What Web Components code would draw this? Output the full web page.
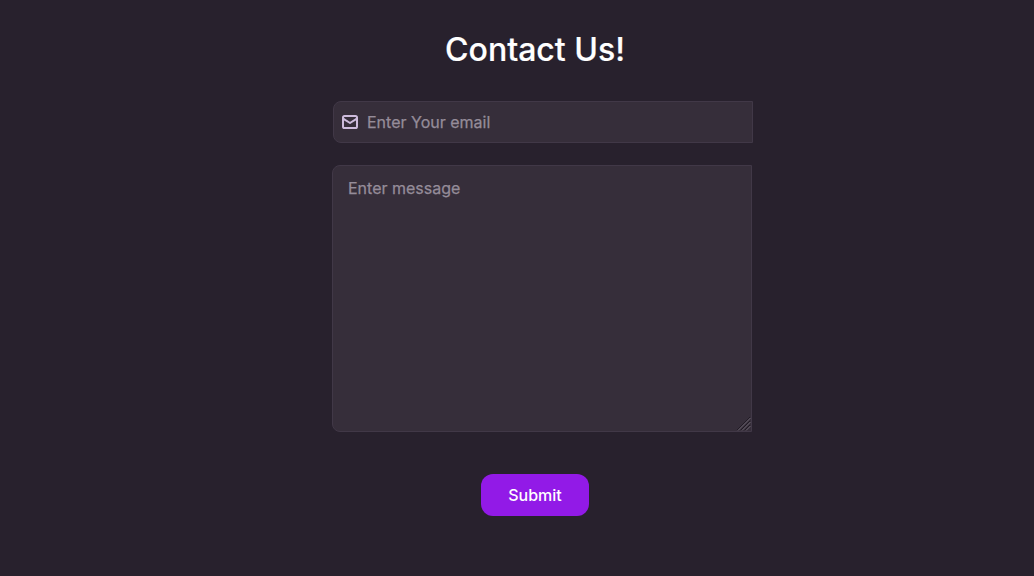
<!DOCTYPE html>
<html lang="en">
<head>
  <meta charset="UTF-8">
  <meta name="viewport" content="width=device-width, initial-scale=1.0">
  <title>Contact Us</title>
  <style>
    body {
      margin: 0;
      background-color: #28212d;
      font-family: Inter, "Liberation Sans", sans-serif;
      color: #fff;
    }
  </style>
</head>
<body>
  <contact-form>
    <span slot="title">Contact Us!</span>
    <email-field>Enter Your email</email-field>
    <message-field>Enter message</message-field>
    <submit-button slot="action">Submit</submit-button>
  </contact-form>

  <script>
    class ContactForm extends HTMLElement {
      constructor() {
        super();
        this.shadowDOM = this.attachShadow({ mode: 'open' });
      }

      connectedCallback() {
        this.render();
      }

      render() {
        this.shadowDOM.innerHTML = `
          <style>
          * {
            margin: 0;
            padding: 0;
            box-sizing: border-box;
          }

          :host {
            display: flex;
            flex-direction: column;
            align-items: center;
            box-sizing: border-box;
            height: 576px;
            padding: 30px 0 0 36px;
          }

          .contact__title {
            font-size: 32px;
            line-height: 40px;
            font-weight: 500;
            white-space: nowrap;
            -webkit-text-stroke: 0.2px currentColor;
          }

          .contact__fields {
            display: flex;
            flex-direction: column;
            gap: 22px;
            width: 421px;
            margin: 31px 0 42px 15px;
          }
          </style>
          <h1 class="contact__title"><slot name="title"></slot></h1>
          <div class="contact__fields"><slot></slot></div>
          <slot name="action"></slot>
        `;
      }
    }

    class EmailField extends HTMLElement {
      constructor() {
        super();
        this.shadowDOM = this.attachShadow({ mode: 'open' });
      }

      connectedCallback() {
        this.render();
      }

      render() {
        this.shadowDOM.innerHTML = `
          <style>
          :host {
            display: flex;
            align-items: center;
            align-self: flex-end;
            gap: 8px;
            box-sizing: border-box;
            width: 420px;
            height: 42px;
            padding-left: 8px;
            border: 1px solid #413847;
            border-radius: 8px 0 0 8px;
            background-color: #362e3a;
            color: #958c99;
            font-size: 16px;
            line-height: 24px;
            -webkit-text-stroke: 0.25px currentColor;
          }

          svg {
            display: block;
            flex: none;
          }
          </style>
          <svg width="17" height="16" viewBox="0 0 17 16" fill="none" stroke="#cdbbdc" stroke-width="2" stroke-linejoin="round">
            <rect x="1" y="2" width="14" height="12" rx="1.6" />
            <path d="M1.5 4.8L8 9L14.5 4.8" />
          </svg>
          <span><slot></slot></span>
        `;
      }
    }

    class MessageField extends HTMLElement {
      constructor() {
        super();
        this.shadowDOM = this.attachShadow({ mode: 'open' });
      }

      connectedCallback() {
        this.render();
      }

      render() {
        this.shadowDOM.innerHTML = `
          <style>
          :host {
            display: flex;
            flex-direction: column;
            justify-content: space-between;
            box-sizing: border-box;
            width: 420px;
            height: 267px;
            padding: 10px 0 0 15px;
            border: 1px solid #413847;
            border-radius: 8px 0 0 8px;
            background-color: #362e3a;
            color: #958c99;
            font-size: 16px;
            line-height: 24px;
            -webkit-text-stroke: 0.25px currentColor;
          }

          svg {
            display: block;
            align-self: flex-end;
          }
          </style>
          <span><slot></slot></span>
          <svg width="15" height="15" viewBox="0 0 15 15" fill="none">
            <path d="M1 14L14 1M5 14L14 5M9 14L14 9" stroke="#211b25" />
            <path d="M2 14.5L14.5 2M6 14.5L14.5 6M10 14.5L14.5 10" stroke="#6c6470" />
          </svg>
        `;
      }
    }

    class SubmitButton extends HTMLElement {
      constructor() {
        super();
        this.shadowDOM = this.attachShadow({ mode: 'open' });
      }

      connectedCallback() {
        this.render();
      }

      render() {
        this.shadowDOM.innerHTML = `
          <style>
          :host {
            display: block;
          }

          button {
            display: block;
            width: 108px;
            height: 42px;
            padding: 0;
            border: 0;
            border-radius: 12px;
            background-color: #921ae7;
            color: #fff;
            font: 500 16px/24px Inter, "Liberation Sans", sans-serif;
          }
          </style>
          <button type="button"><slot></slot></button>
        `;
      }
    }

    customElements.define('contact-form', ContactForm);
    customElements.define('email-field', EmailField);
    customElements.define('message-field', MessageField);
    customElements.define('submit-button', SubmitButton);
  </script>
</body>
</html>
